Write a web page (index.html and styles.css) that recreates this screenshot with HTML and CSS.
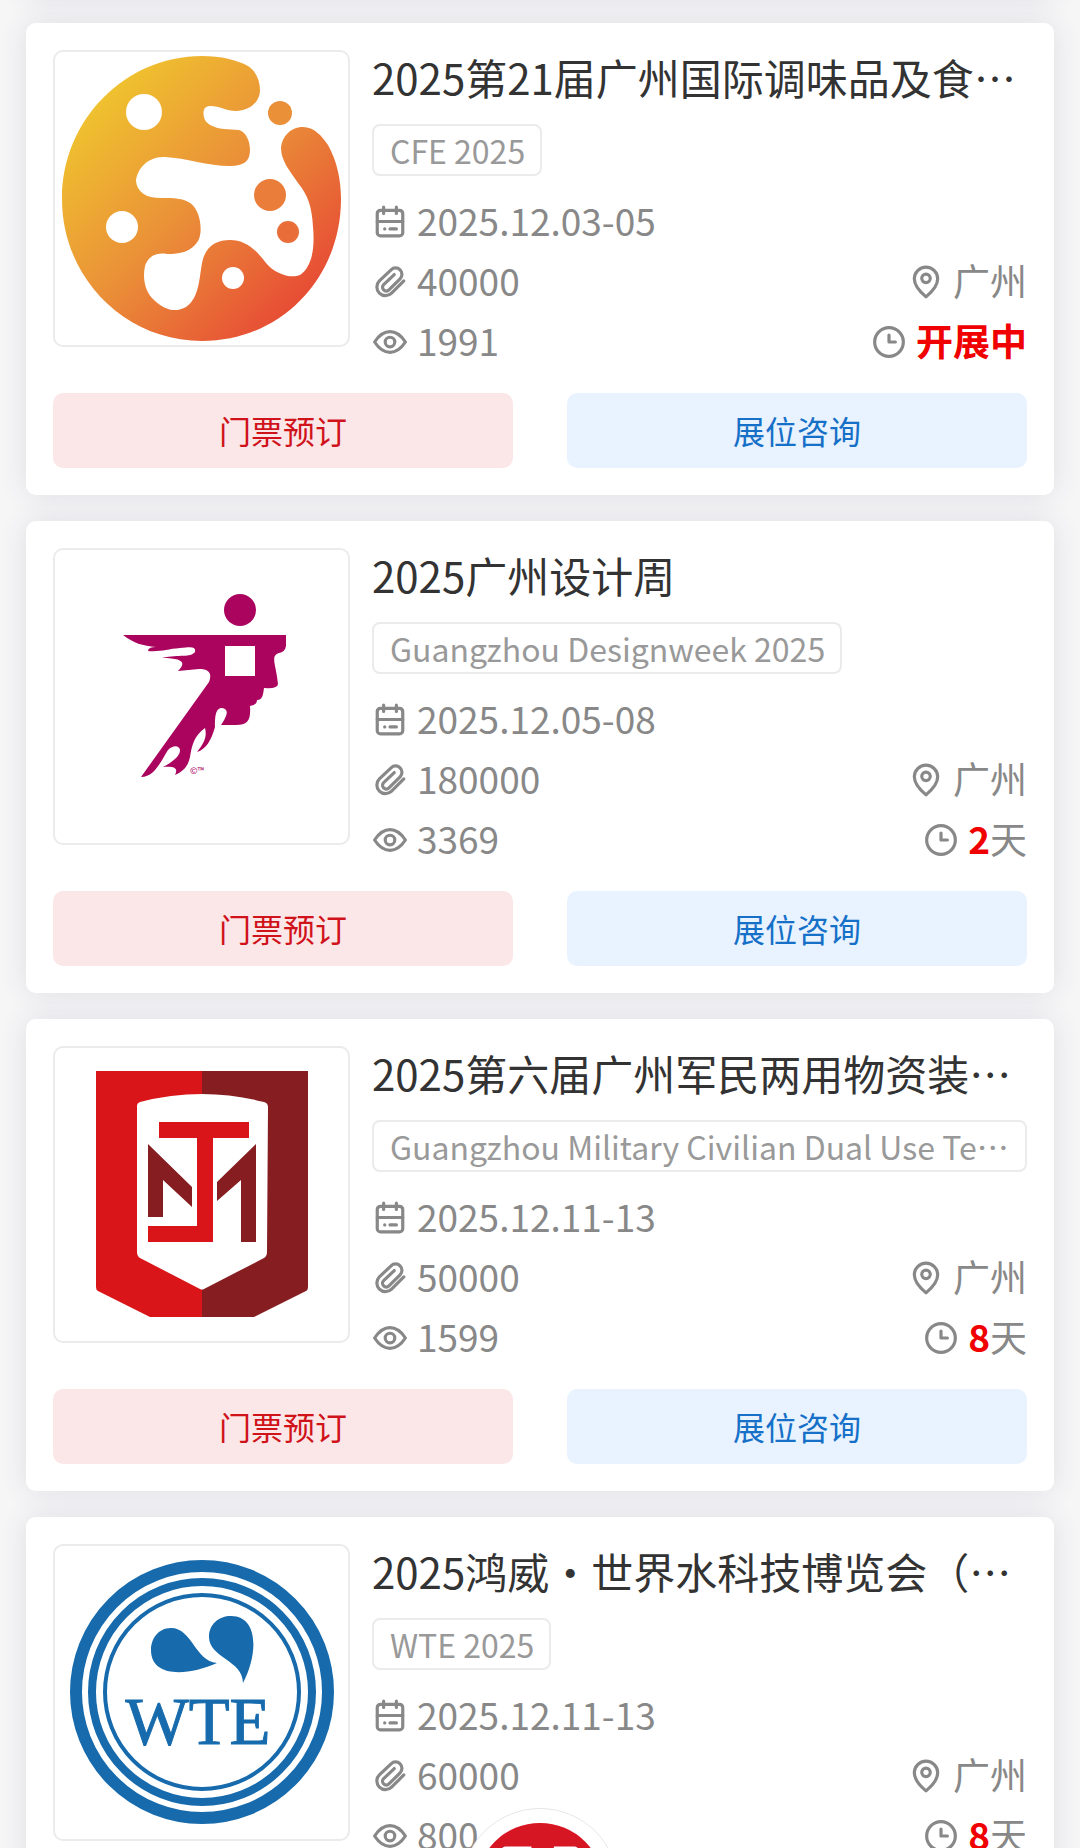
FILE: index.html
```html
<!DOCTYPE html>
<html lang="zh-CN">
<head>
    <meta charset="UTF-8">
    <meta name="viewport" content="width=device-width, initial-scale=1.0">
    <title>广州展会</title>
    <link rel="stylesheet" href="styles.css">
</head>
<body>
    <!-- shared icons -->
    <svg class="sprite" aria-hidden="true">
        <symbol id="i-date" viewBox="0 0 32 32">
            <rect x="4" y="5" width="24" height="24" rx="3"/>
            <path d="M4 15.500h24M10 2v6M22 2v6M16 22.500h6M11 22.500h.1"/>
        </symbol>
        <symbol id="i-clip" viewBox="0 0 32 32">
            <path d="M29 15 17.500 26.500a8 8 0 0 1-11.500-11.500L17 4.500a6 6 0 0 1 8.500 8.500L15 23.500a3.500 3.500 0 0 1-5-5L20 9"/>
        </symbol>
        <symbol id="i-eye" viewBox="0 0 32 32">
            <path d="M1.500 16C10 3 22 3 30.500 16 22 29 10 29 1.500 16z"/>
            <circle cx="16" cy="16" r="4.500"/>
        </symbol>
        <symbol id="i-pin" viewBox="0 0 32 32">
            <path d="M16 30C10 25 5 19 5 13a11 11 0 0 1 22 0c0 6-5 12-11 17z"/>
            <circle cx="16" cy="12.500" r="4"/>
        </symbol>
        <symbol id="i-clock" viewBox="0 0 32 32">
            <circle cx="16" cy="16" r="13.500"/>
            <path d="M16 9.500v6.500h6"/>
        </symbol>
    </svg>

    <main class="list">
        <article class="card">
            <div class="info">
                <div class="logo">
                    <svg viewBox="15 12 293 293">
                        <defs>
                            <linearGradient id="cfe" gradientUnits="userSpaceOnUse" x1="55" y1="70" x2="250" y2="265">
                                <stop offset="0" stop-color="#efc02f"/>
                                <stop offset=".5" stop-color="#ea8f38"/>
                                <stop offset="1" stop-color="#e74f35"/>
                            </linearGradient>
                        </defs>
                        <path fill="url(#cfe)" d="M162 16C181 16 197 20 208 26C216 31 220 41 220 50C220 63 208 71 196 71C186 71 180 66 170 66C161 66 164 77 164 77C165 84 174 88 184 89L199 90C206 92 210 101 210 110C210 121 204 126 190 126C168 126 146 118 125 117C108 116 97 129 96 141C97 153 108 159 124 158C142 158 153 160 158 174C161 182 162 194 158 201C151 212 140 214 127 214C115 212 108 217 105 226C102 240 106 253 114 260C124 270 136 273 146 267C161 257 159 233 163 219C167 205 178 200 190 200C206 200 216 210 226 223C235 234 251 239 260 235C272 227 275 208 273 187C272 167 268 155 258 143C250 131 241 121 241 108C242 97 250 87 263 87C274 87 282 96 288 105C297 121 301 140 301 159C301 238 241 301 162 301C85 301 22 238 22 159C22 80 85 16 162 16z"/>
                        <g fill="#fff">
                            <circle cx="104" cy="72" r="18"/>
                            <circle cx="82" cy="187" r="16"/>
                            <circle cx="193" cy="238" r="11"/>
                        </g>
                        <circle cx="240" cy="73" r="12" fill="#ea9038"/>
                        <circle cx="230" cy="155" r="16" fill="#e97d39"/>
                        <circle cx="248" cy="192" r="11" fill="#e86d38"/>
                    </svg>
                </div>
                <div class="text">
                    <h2 class="title">2025第21届广州国际调味品及食品配料展览会</h2>
                    <div class="tag">CFE 2025</div>
                    <div class="row">
                        <span class="meta"><svg><use href="#i-date"/></svg>2025.12.03-05</span>
                    </div>
                    <div class="row">
                        <span class="meta"><svg><use href="#i-clip"/></svg>40000</span>
                        <span class="meta"><svg><use href="#i-pin"/></svg>广州</span>
                    </div>
                    <div class="row">
                        <span class="meta"><svg><use href="#i-eye"/></svg>1991</span>
                        <span class="meta"><svg><use href="#i-clock"/></svg><b>开展中</b></span>
                    </div>
                </div>
            </div>
            <div class="actions">
                <button class="btn ticket" type="button">门票预订</button>
                <button class="btn booth" type="button">展位咨询</button>
            </div>
        </article>

        <article class="card">
            <div class="info">
                <div class="logo">
                    <svg viewBox="0 0 293 293">
                        <g fill="#aa045f" transform="translate(45 20)">
                            <circle cx="140" cy="40" r="16"/>
                            <path fill-rule="evenodd" d="M23 65H186V76Q185 82 179 83C170 86 176 94 178 114Q178 119 164 118C163 124 163 130 157 130Q157 135 150 136C151 150 148 155 136 155H121C129 143 128 139 122 138C115 138 115 148 115 157C111 171 106 179 97 182C105 172 107 166 105 158C94 166 92 175 90 187C88 196 84 201 75 205C78 199 76 196 63 197C76 190 80 185 80 180C79 175 73 175 68 180C60 193 54 207 41 207L109 112C112 104 110 99 99 99L78 101C86 93 84 88 62 88C80 84 90 88 95 82C96 76 91 77 80 78C67 79 61 82 48 81Q48 77 56 77C43 76 33 73 23 65zM125 76V106H155V76z"/>
                            <text x="90" y="204" font-size="9">©™</text>
                        </g>
                    </svg>
                </div>
                <div class="text">
                    <h2 class="title">2025广州设计周</h2>
                    <div class="tag">Guangzhou Designweek 2025</div>
                    <div class="row">
                        <span class="meta"><svg><use href="#i-date"/></svg>2025.12.05-08</span>
                    </div>
                    <div class="row">
                        <span class="meta"><svg><use href="#i-clip"/></svg>180000</span>
                        <span class="meta"><svg><use href="#i-pin"/></svg>广州</span>
                    </div>
                    <div class="row">
                        <span class="meta"><svg><use href="#i-eye"/></svg>3369</span>
                        <span class="meta"><svg><use href="#i-clock"/></svg><span><b>2</b>天</span></span>
                    </div>
                </div>
            </div>
            <div class="actions">
                <button class="btn ticket" type="button">门票预订</button>
                <button class="btn booth" type="button">展位咨询</button>
            </div>
        </article>

        <article class="card">
            <div class="info">
                <div class="logo">
                    <svg viewBox="0 0 293 293">
                        <g transform="translate(25 2)">
                            <path fill="#d91519" d="M16 21H122V267H70L18 241Q16 240 16 237z"/>
                            <path fill="#861d20" d="M122 21H228V237Q228 240 226 241L174 267H122z"/>
                            <path fill="#fff" d="M57 56Q57 53 60 52Q122 36 184 52Q188 53 188 57L187 202Q187 206 184 208L124 239Q122 240 120 239L60 208Q57 206 57 202z"/>
                            <path fill="#d91519" d="M79 72H169V88H133V192H68V176H117V88H79z"/>
                            <path fill="#861d20" d="M68 94 112 137V157L83 130V167H68zM176 94V192H161V130L137 151V132z"/>
                        </g>
                    </svg>
                </div>
                <div class="text">
                    <h2 class="title">2025第六届广州军民两用物资装备展览会</h2>
                    <div class="tag">Guangzhou Military Civilian Dual Use Technology Expo</div>
                    <div class="row">
                        <span class="meta"><svg><use href="#i-date"/></svg>2025.12.11-13</span>
                    </div>
                    <div class="row">
                        <span class="meta"><svg><use href="#i-clip"/></svg>50000</span>
                        <span class="meta"><svg><use href="#i-pin"/></svg>广州</span>
                    </div>
                    <div class="row">
                        <span class="meta"><svg><use href="#i-eye"/></svg>1599</span>
                        <span class="meta"><svg><use href="#i-clock"/></svg><span><b>8</b>天</span></span>
                    </div>
                </div>
            </div>
            <div class="actions">
                <button class="btn ticket" type="button">门票预订</button>
                <button class="btn booth" type="button">展位咨询</button>
            </div>
        </article>

        <article class="card">
            <div class="info">
                <div class="logo">
                    <svg viewBox="5 6 293 293">
                        <g fill="none" stroke="#176bad">
                            <circle cx="152" cy="152" r="126" stroke-width="12"/>
                            <circle cx="152" cy="152" r="110" stroke-width="8"/>
                            <circle cx="152" cy="152" r="97" stroke-width="4"/>
                        </g>
                        <g fill="#176bad">
                            <path d="M167 123C145 121 142 88 121 88C108 88 101 99 101 110C101 138 138 136 167 123z"/>
                            <path d="M193 143C193 120 159 118 159 97C159 84 169 76 181 76C209 76 208 115 193 143z"/>
                            <text class="wte" x="148" y="204" text-anchor="middle">WTE</text>
                        </g>
                    </svg>
                </div>
                <div class="text">
                    <h2 class="title">2025鸿威・世界水科技博览会（广州）</h2>
                    <div class="tag">WTE 2025</div>
                    <div class="row">
                        <span class="meta"><svg><use href="#i-date"/></svg>2025.12.11-13</span>
                    </div>
                    <div class="row">
                        <span class="meta"><svg><use href="#i-clip"/></svg>60000</span>
                        <span class="meta"><svg><use href="#i-pin"/></svg>广州</span>
                    </div>
                    <div class="row">
                        <span class="meta"><svg><use href="#i-eye"/></svg>800</span>
                        <span class="meta"><svg><use href="#i-clock"/></svg><span><b>8</b>天</span></span>
                    </div>
                </div>
            </div>
            <div class="actions">
                <button class="btn ticket" type="button">门票预订</button>
                <button class="btn booth" type="button">展位咨询</button>
            </div>
        </article>
    </main>

    <button class="fab" type="button" aria-label="首页">
        <svg viewBox="0 0 120 120">
            <circle cx="60" cy="60" r="60" fill="#d71623"/>
            <path d="M24 26Q24 22 28 22H52V32H24zM73 22H92Q96 22 96 26V32H73z" fill="#fff"/>
        </svg>
    </button>
</body>
</html>
```
FILE: styles.css
```css
* {
    box-sizing: border-box;
}
body {
    margin: 0;
    height: 100vh;
    overflow: hidden;
    background-color: #f6f6f7;
    font-family: "Noto Sans CJK SC", sans-serif;
    color: #888;
}
.sprite {
    display: none;
}
.list {
    position: relative;
    z-index: 0;
    display: flex;
    flex-direction: column;
    gap: 26px;
    padding: 0 26px;
}
/* end of the card that is scrolled out above */
.list::before {
    content: "";
    height: 100px;
    margin-top: -103px;
    border-radius: 10px;
    background-color: #fff;
    box-shadow: 0 0 28px rgba(60, 60, 100, 0.12);
}
.card {
    position: relative;
    padding: 27px;
    border-radius: 10px;
    background-color: #fff;
}
/* shadow sits under all the cards, so it never tints the one above */
.card::before {
    content: "";
    position: absolute;
    inset: 0;
    z-index: -1;
    border-radius: 10px;
    box-shadow: 0 0 28px rgba(60, 60, 100, 0.12);
}
.info {
    display: flex;
    gap: 22px;
}
.logo {
    flex: none;
    width: 297px;
    height: 297px;
    border: 2px solid #ebebeb;
    border-radius: 10px;
    overflow: hidden;
}
.logo svg {
    display: block;
    width: 100%;
    height: 100%;
}
.wte {
    font-family: "Liberation Serif", serif;
    font-size: 67px;
    stroke: #176bad;
    stroke-width: 1px;
}
.text {
    flex: 1;
    min-width: 0;
}
.title {
    margin: -4px 0 16px;
    font-size: 42px;
    font-weight: 400;
    line-height: 62px;
    color: #333;
    white-space: nowrap;
    overflow: hidden;
    text-overflow: ellipsis;
}
.tag {
    width: fit-content;
    max-width: 100%;
    margin-bottom: 14px;
    padding: 0 15px 0 16px;
    border: 2px solid #ebebeb;
    border-radius: 8px;
    font-size: 32px;
    line-height: 48px;
    color: #999;
    white-space: nowrap;
    overflow: hidden;
    text-overflow: ellipsis;
}
.row {
    display: flex;
    justify-content: space-between;
    height: 60px;
}
.meta {
    display: flex;
    align-items: center;
    gap: 9px;
    font-size: 37px;
    line-height: 60px;
}
.meta svg {
    width: 36px;
    height: 34px;
    margin-top: 4px;
    fill: none;
    stroke: #888;
    stroke-width: 3;
    stroke-linecap: round;
    stroke-linejoin: round;
}
.meta b {
    font-weight: 700;
    color: #f00000;
}
.actions {
    display: flex;
    gap: 54px;
    margin-top: 23px;
}
.btn {
    flex: 1;
    height: 75px;
    padding: 0 0 2px;
    border: 0;
    border-radius: 10px;
    font-family: inherit;
    font-size: 32px;
}
.ticket {
    background-color: #fbe7e7;
    color: #d0121b;
}
.booth {
    background-color: #e8f3ff;
    color: #1670c8;
}
/* floating button, cut by the bottom edge */
.fab {
    position: fixed;
    left: 50%;
    bottom: -118px;
    width: 158px;
    height: 158px;
    padding: 14px;
    border: 1px solid #e6e6e6;
    border-radius: 50%;
    background-color: #fff;
    transform: translateX(-50%);
}
.fab svg {
    display: block;
    width: 100%;
}
```
